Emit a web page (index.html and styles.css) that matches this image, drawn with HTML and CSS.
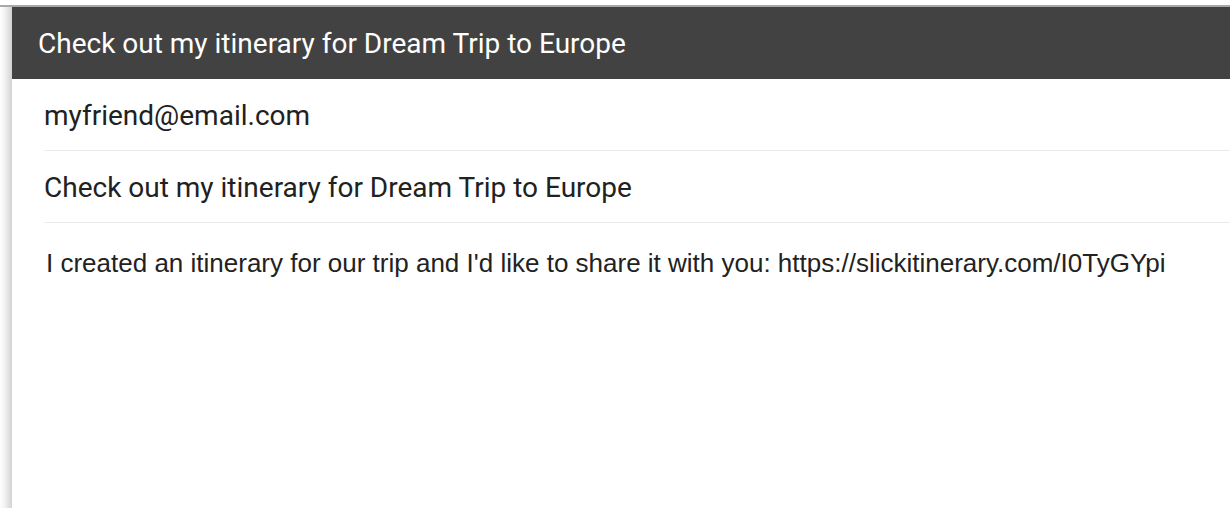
FILE: index.html
```html
<!DOCTYPE html>
<html>
<head>
<meta charset="utf-8">
<link rel="stylesheet" href="styles.css">
</head>
<body>
<div class="page">
  <div class="topbar"></div>
  <div class="main">
    <div class="shadow"></div>
    <div class="panel">
      <div class="header">Check out my itinerary for Dream Trip to Europe</div>
      <div class="fields">
        <div class="field">myfriend@email.com</div>
        <div class="field">Check out my itinerary for Dream Trip to Europe</div>
        <div class="message">I created an itinerary for our trip and I'd like to share it with you: https://slickitinerary.com/I0TyGYpi</div>
      </div>
    </div>
  </div>
</div>
</body>
</html>
```
FILE: styles.css
```css
html, body {
  margin: 0;
  padding: 0;
  background: #ffffff;
}
.page {
  width: 1230px;
  height: 508px;
  display: flex;
  flex-direction: column;
  overflow: hidden;
}
.topbar {
  height: 5px;
  border-bottom: 2px solid #a8a8a8;
  background: #fff;
  flex: none;
}
.main {
  flex: 1;
  display: flex;
}
.shadow {
  width: 12px;
  flex: none;
  background: linear-gradient(to right, #ffffff 0%, #f2f2f2 40%, #d2d2d2 100%);
}
.panel {
  flex: 1;
  display: flex;
  flex-direction: column;
}
.header {
  height: 72px;
  background: #424242;
  color: #ffffff;
  font-family: Roboto, sans-serif;
  font-size: 28px;
  line-height: 33px;
  padding: 20px 0 0 26px;
  box-sizing: border-box;
  white-space: nowrap;
}
.fields {
  padding-left: 32px;
}
.field {
  height: 72px;
  border-bottom: 1px solid #e8eaed;
  font-family: Roboto, sans-serif;
  font-size: 28px;
  line-height: 33px;
  color: #212121;
  padding-top: 20px;
  box-sizing: border-box;
  white-space: nowrap;
}
.message {
  padding-top: 25px;
  padding-left: 2px;
  font-family: "Liberation Sans", Arial, sans-serif;
  font-size: 26px;
  line-height: 30px;
  color: #222222;
  white-space: nowrap;
}
```
